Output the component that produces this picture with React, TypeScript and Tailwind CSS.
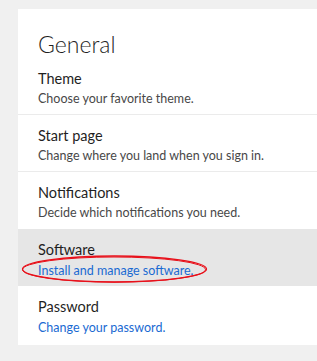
import React from "react";

type Item = { title: string; desc: string; link?: boolean; active?: boolean };

const items: Item[] = [
  { title: "Theme", desc: "Choose your favorite theme." },
  { title: "Start page", desc: "Change where you land when you sign in." },
  { title: "Notifications", desc: "Decide which notifications you need." },
  { title: "Software", desc: "Install and manage software.", link: true, active: true },
  { title: "Password", desc: "Change your password.", link: true },
];

export default function App() {
  return (
    <div
      className="w-[317px] h-[361px] bg-[#f0f0f0] pt-[9px] pl-[18px] overflow-hidden"
      style={{ fontFamily: 'Lato, "Noto Sans", sans-serif' }}
    >
      <div className="bg-white h-[336px] relative">
        <div className="h-[49px] pt-[21px] pl-[20px] text-[23px] leading-[28px] font-light text-[#1f1f1f]">
          General
        </div>
        {items.map((it, i) => (
          <div
            key={it.title}
            className={
              (it.active ? "bg-[#e6e6e6] " : "") +
              (i < 2 ? "border-b border-[#ebebeb] " : "") +
              "h-[57px] pl-[20px] pt-[11px]"
            }
          >
            <div className="text-[14.5px] leading-[20px] text-[#1f1f1f]">{it.title}</div>
            <div
              className={
                (it.link ? "text-[#1a6ad2] mt-[2px] " : "text-[#484848] mt-[1px] ") +
                "text-[12.5px] leading-[17px]"
              }
            >
              {it.desc}
            </div>
          </div>
        ))}
        <svg
          className="absolute left-[3px] top-[245px] pointer-events-none"
          width="190"
          height="30"
          viewBox="0 0 190 30"
        >
          <ellipse cx="93.5" cy="15" rx="92" ry="13" fill="none" stroke="#e8101a" strokeWidth="1.3" />
          <ellipse cx="93" cy="15.6" rx="91.5" ry="12.6" fill="none" stroke="#e8101a" strokeWidth="1" />
        </svg>
      </div>
    </div>
  );
}
